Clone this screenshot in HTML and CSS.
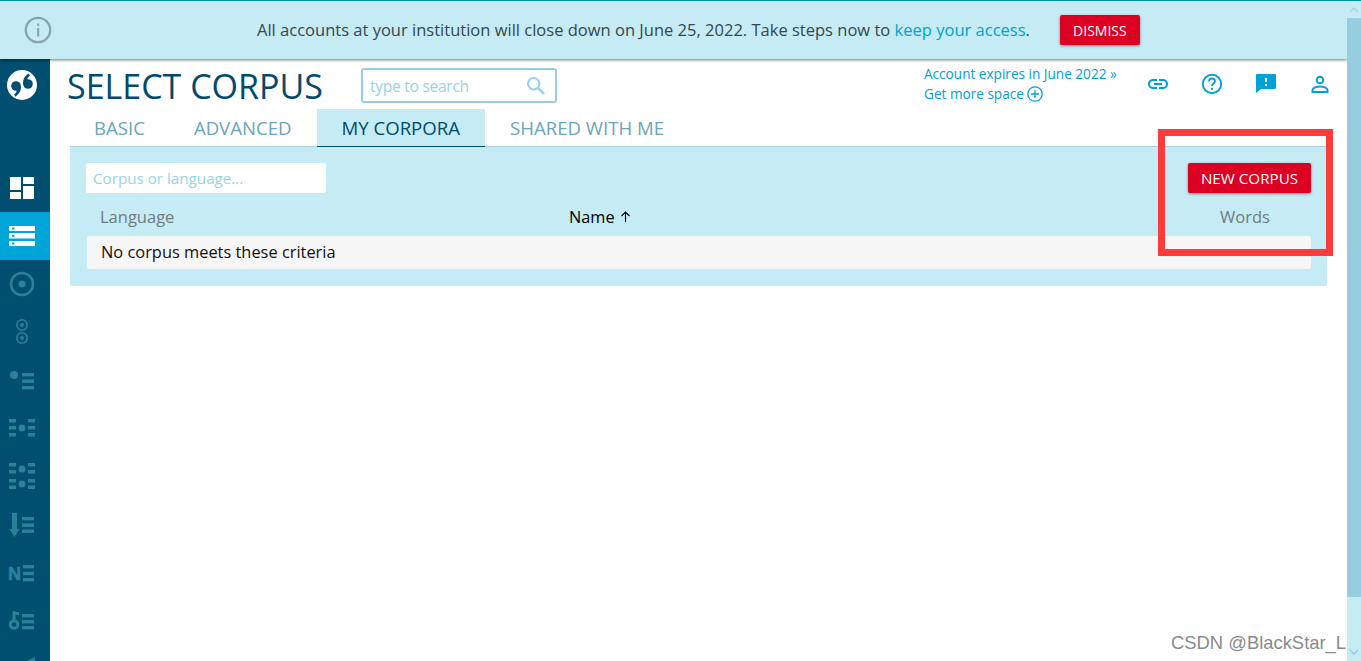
FILE: index.html
```html
<!DOCTYPE html>
<html lang="en">
<head>
<meta charset="utf-8">
<title>Select corpus</title>
<link rel="stylesheet" href="styles.css">
</head>
<body>
<div class="page">
  <div class="viewport">
    <div class="banner">
      <svg class="info-icon" width="28" height="28" viewBox="0 0 28 28"><circle cx="14" cy="14" r="12.200" fill="none" stroke="#8ba4ac" stroke-width="2.300"/><rect x="13" y="12" width="2.200" height="8.500" fill="#8ba4ac"/><rect x="13" y="7.500" width="2.200" height="2.400" fill="#8ba4ac"/></svg>
      <p class="banner-text">All accounts at your institution will close down on June 25, 2022. Take steps now to <a class="link" href="#">keep your access</a>.</p>
      <button class="btn btn-dismiss">DISMISS</button>
    </div>
    <div class="body-row">
      <nav class="sidebar">
        <div class="logo">
          <svg width="44" height="105" viewBox="0 0 44 105"><circle cx="22" cy="26" r="15" fill="#fff"/><g fill="#004f70"><circle cx="16" cy="27" r="4.800"/><path d="M20.800 26.500C21.500 31 19.500 35 15.500 37.500L14 35.500C16 34 17 32.500 16.500 31Z"/><circle cx="28" cy="25" r="4.800"/><path d="M23.200 25.500C22.500 21 24.500 17 28.500 14.500L30 16.500C28 18 27 19.500 27.500 21Z"/></g></svg>
        </div>
        <a class="nav-item" href="#"><svg width="44" height="48" viewBox="0 0 44 48" fill="#fff"><rect x="10" y="13" width="11" height="13"/><rect x="23" y="13" width="11" height="7"/><rect x="10" y="28" width="11" height="7"/><rect x="23" y="22" width="11" height="13"/></svg></a>
        <a class="nav-item active" href="#"><svg width="44" height="48" viewBox="0 0 44 48"><g fill="#fff"><rect x="9" y="14" width="26" height="5"/><rect x="9" y="21" width="26" height="5.500"/><rect x="9" y="29" width="26" height="5"/></g><g fill="#00a5d8"><rect x="12" y="15.500" width="2.500" height="2"/><rect x="12" y="22.800" width="2.500" height="2"/><rect x="12" y="30.500" width="2.500" height="2"/></g></svg></a>
        <a class="nav-item" href="#"><svg width="44" height="48" viewBox="0 0 44 48"><circle cx="22" cy="24" r="11" fill="none" stroke="currentColor" stroke-width="2.500"/><circle cx="22" cy="24" r="3.600" fill="currentColor"/></svg></a>
        <a class="nav-item" href="#"><svg width="44" height="48" viewBox="0 0 44 48"><g fill="none" stroke="currentColor" stroke-width="1.500"><circle cx="22" cy="17" r="5.200"/><circle cx="22" cy="30" r="5.200"/></g><circle cx="22" cy="17" r="1.900" fill="currentColor"/><circle cx="22" cy="30" r="1.900" fill="currentColor"/></svg></a>
        <a class="nav-item" href="#"><svg width="44" height="48" viewBox="0 0 44 48" fill="currentColor"><circle cx="14" cy="19" r="4"/><rect x="22" y="17" width="12" height="3.400"/><rect x="22" y="23.500" width="12" height="3.400"/><rect x="22" y="30" width="12" height="3.400"/></svg></a>
        <a class="nav-item" href="#"><svg width="44" height="48" viewBox="0 0 44 48" fill="currentColor"><circle cx="22" cy="24" r="3.500"/><rect x="9" y="15" width="7" height="3.500"/><rect x="9" y="22" width="7" height="3.500"/><rect x="9" y="29" width="7" height="3.500"/><rect x="28" y="15" width="7" height="3.500"/><rect x="28" y="22" width="7" height="3.500"/><rect x="28" y="29" width="7" height="3.500"/></svg></a>
        <a class="nav-item" href="#"><svg width="44" height="48" viewBox="0 0 44 48" fill="currentColor"><circle cx="22" cy="17" r="3.500"/><circle cx="22" cy="32" r="3.500"/><rect x="9" y="11" width="7" height="3.500"/><rect x="9" y="18" width="7" height="3.500"/><rect x="9" y="27" width="7" height="3.500"/><rect x="9" y="33.500" width="7" height="3.500"/><rect x="28" y="11" width="7" height="3.500"/><rect x="28" y="18" width="7" height="3.500"/><rect x="28" y="27" width="7" height="3.500"/><rect x="28" y="33.500" width="7" height="3.500"/></svg></a>
        <a class="nav-item" href="#"><svg width="44" height="48" viewBox="0 0 44 48" fill="currentColor"><path d="M12 13h5v16h2.500l-5 8-5-8H12z"/><rect x="22" y="17" width="12" height="3.400"/><rect x="22" y="23.500" width="12" height="3.400"/><rect x="22" y="29.500" width="12" height="3.400"/></svg></a>
        <a class="nav-item" href="#"><svg width="44" height="48" viewBox="0 0 44 48" fill="currentColor"><text x="8" y="32" class="nav-n">N</text><rect x="23" y="17" width="11" height="3.400"/><rect x="23" y="23.800" width="11" height="3.400"/><rect x="23" y="30" width="11" height="3.400"/></svg></a>
        <a class="nav-item" href="#"><svg width="44" height="48" viewBox="0 0 44 48" fill="currentColor"><circle cx="14" cy="28.500" r="3.800" fill="none" stroke="currentColor" stroke-width="3"/><path d="M12.500 15h3v1h3.500v3h-3.500v7h-3z"/><rect x="22" y="18" width="12" height="3.400"/><rect x="22" y="24" width="12" height="3.400"/><rect x="22" y="30" width="12" height="3.400"/></svg></a>
        <a class="nav-item" href="#"><svg width="44" height="48" viewBox="0 0 44 48" fill="currentColor"><path d="M27 17l8-4v8h-8z"/></svg></a>
      </nav>
      <main class="main">
        <header class="head">
          <h1 class="title">SELECT CORPUS</h1>
          <div class="search">
            <span class="search-text">type to search</span>
            <svg width="20" height="20" viewBox="0 0 20 20" fill="none" stroke="#96d3e6" stroke-width="2"><circle cx="7.700" cy="7.700" r="5.700"/><path d="M12 12l6 6" stroke-width="2.500"/></svg>
          </div>
          <div class="account">
            <a class="link" href="#">Account expires in June 2022 »</a>
            <a class="link more" href="#">Get more space <svg width="16" height="16" viewBox="0 0 16 16" fill="none" stroke="#00a0d8" stroke-width="1.300"><circle cx="8" cy="8" r="7.200"/><path d="M8 4v8M4 8h8"/></svg></a>
          </div>
          <div class="tools">
            <svg width="22" height="22" viewBox="1 1 22 22" fill="#00a0d8"><path d="M3.900 12c0-1.710 1.390-3.100 3.100-3.100h4V7H7c-2.760 0-5 2.240-5 5s2.240 5 5 5h4v-1.900H7c-1.710 0-3.100-1.390-3.100-3.100zM8 13h8v-2H8v2zm9-6h-4v1.900h4c1.710 0 3.100 1.390 3.100 3.100s-1.390 3.100-3.100 3.100h-4V17h4c2.760 0 5-2.240 5-5s-2.240-5-5-5z"/></svg>
            <svg width="22" height="22" viewBox="0 0 22 22" fill="none" stroke="#00a0d8" stroke-width="1.900"><circle cx="11" cy="11" r="9.200"/><path d="M8 8.500c0-1.700 1.300-3 3-3s3 1.200 3 2.800c0 2.200-3 2.300-3 4.700" stroke-width="1.800"/><rect x="10" y="14.800" width="2" height="2" fill="#00a0d8" stroke="none"/></svg>
            <svg width="22" height="22" viewBox="0 0 22 22"><path d="M2 1h18a1 1 0 0 1 1 1v13a1 1 0 0 1-1 1H6l-5 4V2a1 1 0 0 1 1-1z" fill="#00a0d8"/><rect x="10" y="5" width="2" height="4" fill="#fff"/><rect x="10" y="11" width="2" height="2" fill="#fff"/></svg>
            <svg width="22" height="22" viewBox="0 0 22 22" fill="none" stroke="#00a0d8" stroke-width="2"><circle cx="11" cy="7" r="3.300"/><path d="M3.500 19v-2c0-2.200 4.500-3.500 7.500-3.500s7.500 1.300 7.500 3.500v2z"/></svg>
          </div>
        </header>
        <div class="tabs">
          <a class="tab" href="#">BASIC</a>
          <a class="tab" href="#">ADVANCED</a>
          <a class="tab current" href="#">MY CORPORA</a>
          <a class="tab" href="#">SHARED WITH ME</a>
        </div>
        <section class="panel">
          <div class="panel-top">
            <div class="filter">Corpus or language...</div>
            <button class="btn btn-new">NEW CORPUS</button>
          </div>
          <div class="cols">
            <span class="col col-lang">Language</span>
            <span class="col col-name">Name <svg width="11" height="11" viewBox="0 0 11 11" fill="none" stroke="#000" stroke-width="1.100"><path d="M5.500 11V1M1.500 5l4-4 4 4"/></svg></span>
            <span class="col col-words">Words</span>
          </div>
          <div class="empty">No corpus meets these criteria</div>
        </section>
      </main>
    </div>
    <div class="annotation"></div>
    <div class="watermark">CSDN @BlackStar_L</div>
  </div>
  <div class="scrollbar">
    <div class="arrow arrow-top"><svg width="10" height="6" viewBox="0 0 10 6" fill="none" stroke="#a4dcec" stroke-width="1.500"><path d="M1 5l4-4 4 4"/></svg></div>
    <div class="thumb"></div>
    <div class="track"></div>
    <div class="arrow"><svg width="10" height="6" viewBox="0 0 10 6" fill="none" stroke="#8fd0e4" stroke-width="1.500"><path d="M1 1l4 4 4-4"/></svg></div>
  </div>
</div>
</body>
</html>
```
FILE: styles.css
```css
* { box-sizing: border-box; }
html, body { margin: 0; height: 100%; overflow: hidden; }
body { font-family: "Open Sans", "Noto Sans", sans-serif; background: #fff; color: #000; }
a { text-decoration: none; }
p, h1 { margin: 0; }
.page { display: flex; height: 661px; }
.viewport { position: relative; flex: 1; min-width: 0; display: flex; flex-direction: column; overflow: hidden; }
.scrollbar { width: 14px; flex: none; display: flex; flex-direction: column; background: #c5ebf5; }
.arrow { height: 18px; display: flex; align-items: center; justify-content: center; background: #c5ebf5; }
.arrow-top { border-top: 1px solid #008c99; }
.thumb { height: 579px; background: #96cddf; }
.track { flex: 1; }

.banner { height: 59px; flex: none; display: flex; align-items: center; background: #c5ebf5; border-top: 1px solid #008c99; padding-left: 24px; box-shadow: 0 1px 3px rgba(0,0,0,.55); position: relative; z-index: 2; }
.info-icon { flex: none; }
.banner-text { margin-left: 205px; margin-bottom: 2px; font-size: 16.520px; color: #36474f; white-space: nowrap; }
.link { color: #00a0d8; }
.btn { border: 0; background: #dc0023; color: #fff; font-family: inherit; font-weight: 500; border-radius: 2px; box-shadow: 0 1px 3px rgba(0,0,0,.4); padding: 0; }
.btn-dismiss { width: 80px; height: 30px; margin-left: 30px; font-size: 14px; flex: none; }

.body-row { flex: 1; display: flex; min-height: 0; }
.sidebar { width: 50px; flex: none; background: #004f70; color: #2a8299; display: flex; flex-direction: column; }
.logo { height: 105px; flex: none; }
.logo svg, .nav-item svg { display: block; }
.nav-item { display: block; height: 48px; flex: none; color: inherit; }
.nav-item.active { background: #00a5d8; }
.nav-n { font-family: "Liberation Sans", sans-serif; font-weight: 700; font-size: 18px; stroke: currentColor; stroke-width: .5px; }

.main { flex: 1; min-width: 0; padding-left: 20px; padding-right: 20px; }
.head { height: 50px; display: flex; align-items: flex-start; }
.title { flex: none; margin-left: -3px; margin-top: 5px; font-size: 34px; line-height: 45px; font-weight: 400; color: #004a6e; white-space: nowrap; width: 294px; }
.search { flex: none; margin-top: 9px; width: 196px; height: 35px; border: 2px solid #96cfe2; border-radius: 3px; display: flex; align-items: center; justify-content: space-between; padding: 0 9px 0 7px; }
.search-text { font-size: 15.500px; letter-spacing: -.25px; color: #96d3e6; }
.account { flex: none; margin-left: 367px; margin-top: 5px; font-size: 13.600px; line-height: 20px; display: flex; flex-direction: column; white-space: nowrap; width: 223px; }
.more { display: flex; align-items: center; gap: 3px; }
.tools { flex: none; margin-top: 14px; width: 184px; display: flex; justify-content: space-between; }

.tabs { height: 38px; display: flex; margin-left: -1px; }
.tab { height: 38px; padding: 0 25px; font-size: 18.600px; line-height: 38px; color: #6ba5b8; white-space: nowrap; }
.tab:first-child { margin-right: -1px; }
.tab.current { background: #c5ebf5; color: #004a6e; border-bottom: 1px solid #004a6e; }
.panel { height: 140px; margin-top: -1px; background: #c5ebf5; border-top: 1px solid #a9d3e0; border-radius: 0 0 2px 2px; padding: 16px 16px 0 16px; }
.panel-top { display: flex; justify-content: space-between; }
.filter { width: 240px; height: 30px; padding-left: 7px; font-size: 15.200px; line-height: 30px; background: #fff; border-radius: 2px; color: #96d3e6; }
.btn-new { width: 123px; height: 30px; font-size: 15.200px; }
.cols { height: 43px; padding-top: 4px; display: flex; align-items: center; font-size: 16.500px; color: #6f7c80; }
.col-lang { margin-left: 14px; width: 469px; flex: none; }
.col-name { color: #000; display: flex; align-items: center; gap: 5px; width: 651px; flex: none; font-size: 16.300px; }
.empty { height: 33px; margin-left: 1px; padding-left: 14px; background: #f6f6f6; border-radius: 2px; font-size: 16.400px; line-height: 31px; color: #111; }

.annotation { position: absolute; left: 1158px; top: 129px; width: 175px; height: 127px; border: 7px solid #ff3b3b; z-index: 3; }
.watermark { position: absolute; left: 1171px; top: 632px; font-family: "Liberation Sans", sans-serif; font-size: 18.400px; line-height: 22px; color: #8a8a8a; white-space: nowrap; z-index: 3; }
```
